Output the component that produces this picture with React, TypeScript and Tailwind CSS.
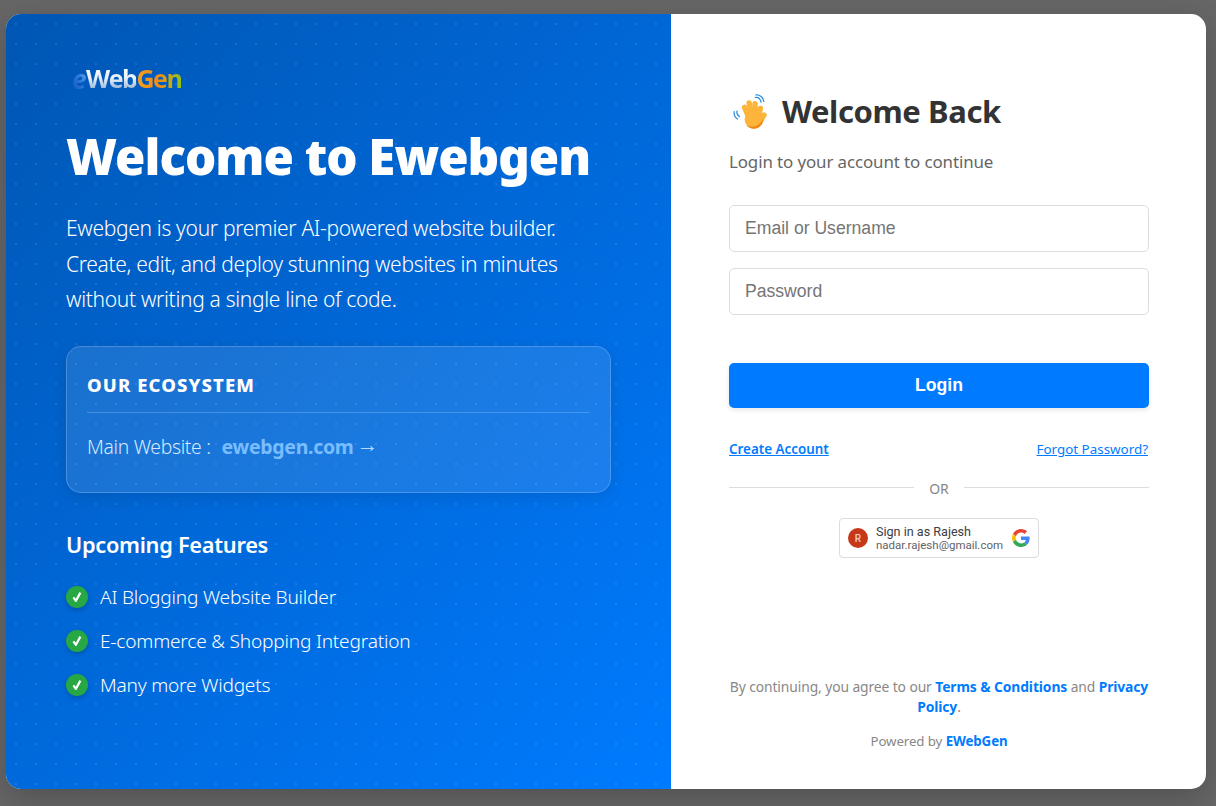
import React from "react";

const seg = "font-['Noto_Sans','Open_Sans',sans-serif]";

function Check() {
  return (
    <span className="flex h-[22px] w-[22px] shrink-0 items-center justify-center rounded-full bg-[#28a745] shadow-[0_2px_5px_rgba(0,0,0,0.2)]">
      <svg width="12" height="12" viewBox="0 0 12 12" fill="none">
        <path d="M2.4 6.4 L4.9 9.8 L9.4 1.6" stroke="white" strokeWidth="2.2" strokeLinejoin="round" />
      </svg>
    </span>
  );
}

function Wave() {
  return (
    <svg width="36" height="36" viewBox="0 0 36 36" fill="none" className="shrink-0">
      <g stroke="#fcb43a" strokeWidth="5.4" strokeLinecap="round">
        <path d="M16 24 L11.6 13.4" />
        <path d="M19 22 L16.2 9" />
        <path d="M22.6 22 L22 9.6" />
        <path d="M25 23 L27.4 14.4" />
        <path d="M26 29 L31 21" />
      </g>
      <ellipse cx="21" cy="25.6" rx="9.4" ry="9" fill="#fcb43a" />
      <path d="M30.4 24.5 C30.4 30 26 34.8 21 34.8 C17.6 34.8 15 33.4 13.4 30.8 C16 32.6 19.6 33 22.6 32 C26 30.6 28.8 27.8 30.4 24.5 Z" fill="#ee8a1c" />
      <path d="M22.4 3.4 C25 3.2 27.4 5 28 8 M23 0.9 C26.8 0.5 30.2 3.2 30.8 7.4" stroke="#2f8fdc" strokeWidth="1.3" strokeLinecap="round" />
      <path d="M1.2 17.6 C0.8 20.4 2.2 23.6 4.6 25 M4 17.2 C3.6 19.2 4.6 21.4 6.4 22.6" stroke="#2f8fdc" strokeWidth="1.3" strokeLinecap="round" />
    </svg>
  );
}

function GoogleG() {
  return (
    <svg width="18" height="18" viewBox="0 0 48 48">
      <path fill="#EA4335" d="M24 9.5c3.54 0 6.71 1.22 9.21 3.6l6.85-6.85C35.9 2.38 30.47 0 24 0 14.62 0 6.51 5.38 2.56 13.22l7.98 6.19C12.43 13.72 17.74 9.5 24 9.5z" />
      <path fill="#4285F4" d="M46.98 24.55c0-1.57-.15-3.09-.38-4.55H24v9.02h12.94c-.58 2.96-2.26 5.48-4.78 7.18l7.73 6c4.51-4.18 7.09-10.36 7.09-17.65z" />
      <path fill="#FBBC05" d="M10.53 28.59c-.48-1.45-.76-2.99-.76-4.59s.27-3.14.76-4.59l-7.98-6.19C.92 16.46 0 20.12 0 24c0 3.88.92 7.54 2.56 10.78l7.97-6.19z" />
      <path fill="#34A853" d="M24 48c6.48 0 11.93-2.13 15.89-5.81l-7.73-6c-2.15 1.45-4.92 2.3-8.16 2.3-6.26 0-11.57-4.22-13.47-9.91l-7.98 6.19C6.51 42.62 14.62 48 24 48z" />
    </svg>
  );
}

function Logo() {
  return (
    <div className="ml-[6px] flex h-[25px] items-center font-['Open_Sans',sans-serif] text-[25px] font-bold leading-none tracking-[-1.45px]">
      <span className="bg-gradient-to-tr from-[#1450b8] via-[#2a78dc] to-[#6fb4f4] bg-clip-text pr-[1px] text-[26px] italic text-transparent">e</span>
      <span className="bg-gradient-to-b from-[#ffffff] via-[#e6eef8] to-[#8fadd4] bg-clip-text text-transparent">Web</span>
      <span className="bg-gradient-to-r from-[#f5a01f] via-[#f08a16] to-[#8cc11c] bg-clip-text text-transparent">Gen</span>
    </div>
  );
}

const features = [
  "AI Blogging Website Builder",
  "E-commerce & Shopping Integration",
  "Many more Widgets",
];

export default function App() {
  return (
    <div className={`flex h-[806px] w-[1216px] overflow-hidden bg-[#666666] pb-[17px] pl-[6px] pr-[10px] pt-[14px] ${seg}`}>
      <div className="flex w-full overflow-hidden rounded-[15px] bg-white shadow-[0_10px_30px_rgba(0,0,0,0.2)]">
        {/* Left */}
        <div className="w-[665px] shrink-0 bg-[radial-gradient(rgba(255,255,255,0.1)_1px,transparent_1px),linear-gradient(135deg,#0056b3,#007bff)] bg-[size:20px_20px,100%_100%] pl-[60px] pr-[60px] pt-[52px] text-white">
          <Logo />
          <h1 className="mt-[33px] whitespace-nowrap text-[49.2px] font-black leading-[64px] tracking-[-1px]">Welcome to Ewebgen</h1>
          <p className="mt-[23px] text-[21px] font-light leading-[35.7px] tracking-[-0.32px] text-white">
            <span className="block whitespace-nowrap">Ewebgen is your premier AI-powered website builder.</span>
            <span className="block whitespace-nowrap">Create, edit, and deploy stunning websites in minutes</span>
            <span className="block whitespace-nowrap">without writing a single line of code.</span>
          </p>
          <div className="mt-[28px] h-[147px] w-[545px] rounded-[15px] border border-white/20 bg-white/10 px-5 pt-[24px] shadow-[0_4px_15px_rgba(0,0,0,0.1)]">
            <div className="border-b border-white/20 pb-[14px] text-[18.5px] font-extrabold leading-[27px] tracking-[1.1px]">OUR ECOSYSTEM</div>
            <div className="mt-[17px] flex items-center whitespace-nowrap text-[19.3px] font-light leading-[34px] tracking-[-0.3px] text-[#d6e9ff]">
              Main Website :
              <span className="ml-[11px] text-[19.5px] font-bold text-[#79bdff]">ewebgen.com</span>
              <span className="ml-[3px] -translate-y-[4px] text-[22px] text-[#b5d9ff]">→</span>
            </div>
          </div>
          <h2 className="mt-[36px] text-[21.8px] font-semibold leading-[32px] tracking-[-0.3px]">Upcoming Features</h2>
          <ul className="mt-[21px] flex flex-col gap-[14px]">
            {features.map((f) => (
              <li key={f} className="flex h-[30px] items-center gap-3 text-[19.1px] font-light tracking-[-0.2px] text-white">
                <Check />
                {f}
              </li>
            ))}
          </ul>
        </div>
        {/* Right */}
        <div className="flex flex-1 flex-col pl-[58px] pr-[57px] pt-[78px]">
          <div className="flex h-[40px] items-center gap-[13px] pl-[4px]">
            <Wave />
            <h2 className="pb-[2px] text-[31px] font-bold leading-[38px] tracking-[-0.4px] text-[#333333]">Welcome Back</h2>
          </div>
          <p className="mt-[18px] text-[16.9px] leading-[24px] tracking-[-0.1px] text-[#666666]">Login to your account to continue</p>
          <input placeholder="Email or Username" className="mt-[31px] h-[47px] w-full rounded-[5px] border border-[#dddddd] px-[15px] font-['Liberation_Sans',sans-serif] text-[17.6px] placeholder:text-[#757575]" />
          <input placeholder="Password" type="password" className="mt-[16px] h-[47px] w-full rounded-[5px] border border-[#dddddd] px-[15px] font-['Liberation_Sans',sans-serif] text-[17.6px] placeholder:text-[#757575]" />
          <button className="mt-[48px] h-[45px] w-full rounded-[5px] bg-[#007bff] font-['Liberation_Sans',sans-serif] text-[17.6px] font-bold text-white shadow-[0_2px_5px_rgba(0,0,0,0.1)]">Login</button>
          <div className="mt-[31px] flex h-[20px] items-center justify-between text-[13.4px] leading-[20px] text-[#007bff]">
            <a className="font-semibold underline">Create Account</a>
            <a className="mr-[1px] underline">Forgot Password?</a>
          </div>
          <div className="mt-[19px] flex h-[20px] items-center text-[14px] text-[#888888]">
            <div className="mb-[2px] h-px flex-1 bg-[#dddddd]" />
            <span className="px-[15px]">OR</span>
            <div className="mb-[2px] h-px flex-1 bg-[#dddddd]" />
          </div>
          <div className="mt-[20px] flex justify-center">
            <div className="flex h-[40px] w-[200px] items-center rounded-[4px] border border-[#dadce0] bg-white pl-[8px] pr-[8px] font-['Roboto',sans-serif]">
              <span className="flex h-[20px] w-[20px] items-center justify-center rounded-full bg-[#c5391a] text-[10px] font-medium text-[#f3c9bd]">R</span>
              <div className="ml-[8px] flex-1 whitespace-nowrap leading-none">
                <div className="text-[12.6px] leading-[14px] text-[#3c4043]">Sign in as Rajesh</div>
                <div className="text-[11.5px] leading-[13px] text-[#5f6368]">nadar.rajesh@gmail.com</div>
              </div>
              <GoogleG />
            </div>
          </div>
          <p className="mt-[119px] text-center text-[13.85px] leading-[20px] tracking-[-0.1px] text-[#888888]">
            By continuing, you agree to our <b className="font-bold text-[#007bff]">Terms &amp; Conditions</b> and <b className="font-bold text-[#007bff]">Privacy Policy</b>.
          </p>
          <p className="mt-[14px] text-center text-[13.3px] leading-[20px] tracking-[-0.1px] text-[#888888]">
            Powered by <b className="font-bold text-[#007bff]">EWebGen</b>
          </p>
        </div>
      </div>
    </div>
  );
}
